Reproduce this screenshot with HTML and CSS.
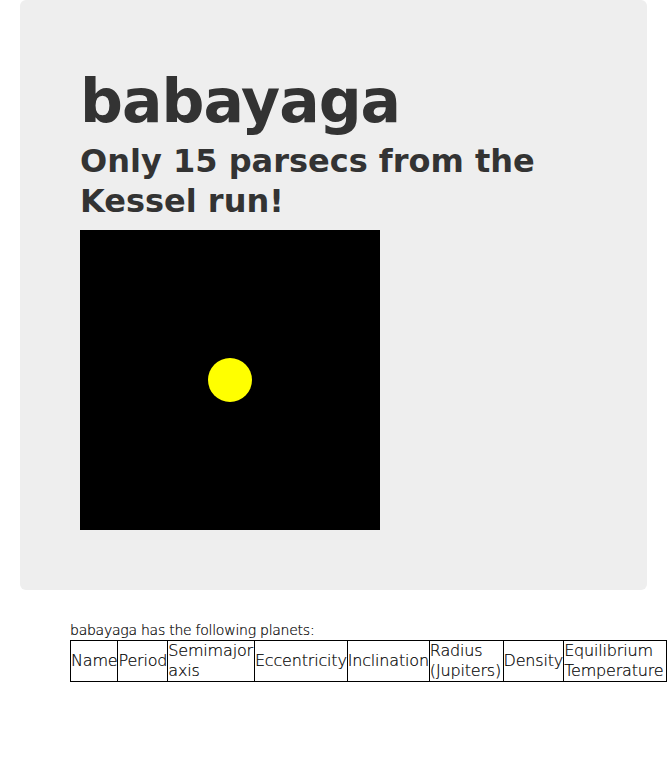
FILE: index.html
```html
<!DOCTYPE html>
<html>
<head>
<meta charset="utf-8">
<link rel="stylesheet" href="styles.css">
</head>
<body>
<div class="jumbo">
  <h1 class="title">babayaga</h1>
  <h2 class="subtitle">Only 15 parsecs from the Kessel run!</h2>
  <div class="sky"><div class="star"></div></div>
</div>
<div class="planets">
  <p class="caption">babayaga has the following planets:</p>
  <table class="ptable">
    <tr>
      <td>Name</td><td>Period</td><td>Semimajor axis</td><td>Eccentricity</td><td>Inclination</td><td>Radius (Jupiters)</td><td>Density</td><td>Equilibrium Temperature</td>
    </tr>
  </table>
</div>
</body>
</html>
```
FILE: styles.css
```css
html, body {
  margin: 0;
  padding: 0;
  background: #fff;
}
body {
  font-family: "DejaVu Sans", sans-serif;
  color: #333;
}
.jumbo {
  margin: 0 20px;
  background: #eeeeee;
  border-radius: 6px;
  padding: 65px 60px 60px 60px;
  height: 590px;
  box-sizing: border-box;
}
.title {
  margin: 0;
  font-size: 60px;
  line-height: 72px;
  font-weight: bold;
  letter-spacing: -1px;
}
.subtitle {
  margin: 4px 0 0 0;
  font-size: 32px;
  line-height: 40px;
  font-weight: bold;
}
.sky {
  margin-top: 9px;
  width: 300px;
  height: 300px;
  background: #000;
  display: flex;
  align-items: center;
  justify-content: center;
}
.star {
  width: 44px;
  height: 44px;
  border-radius: 50%;
  background: #ffff00;
}
.planets {
  padding: 30px 0 0 70px;
}
.caption {
  margin: 0;
  font-size: 14px;
  line-height: 20px;
  font-weight: 200;
  color: #000;
  letter-spacing: -0.25px;
  -webkit-text-stroke: 0.2px #000;
}
.ptable {
  border-collapse: collapse;
  font-size: 16px;
  line-height: 20px;
  font-weight: 200;
  color: #000;
  letter-spacing: -0.18px;
  -webkit-text-stroke: 0.2px #000;
}
.ptable td {
  border: 1px solid #000;
  padding: 0;
}
```
